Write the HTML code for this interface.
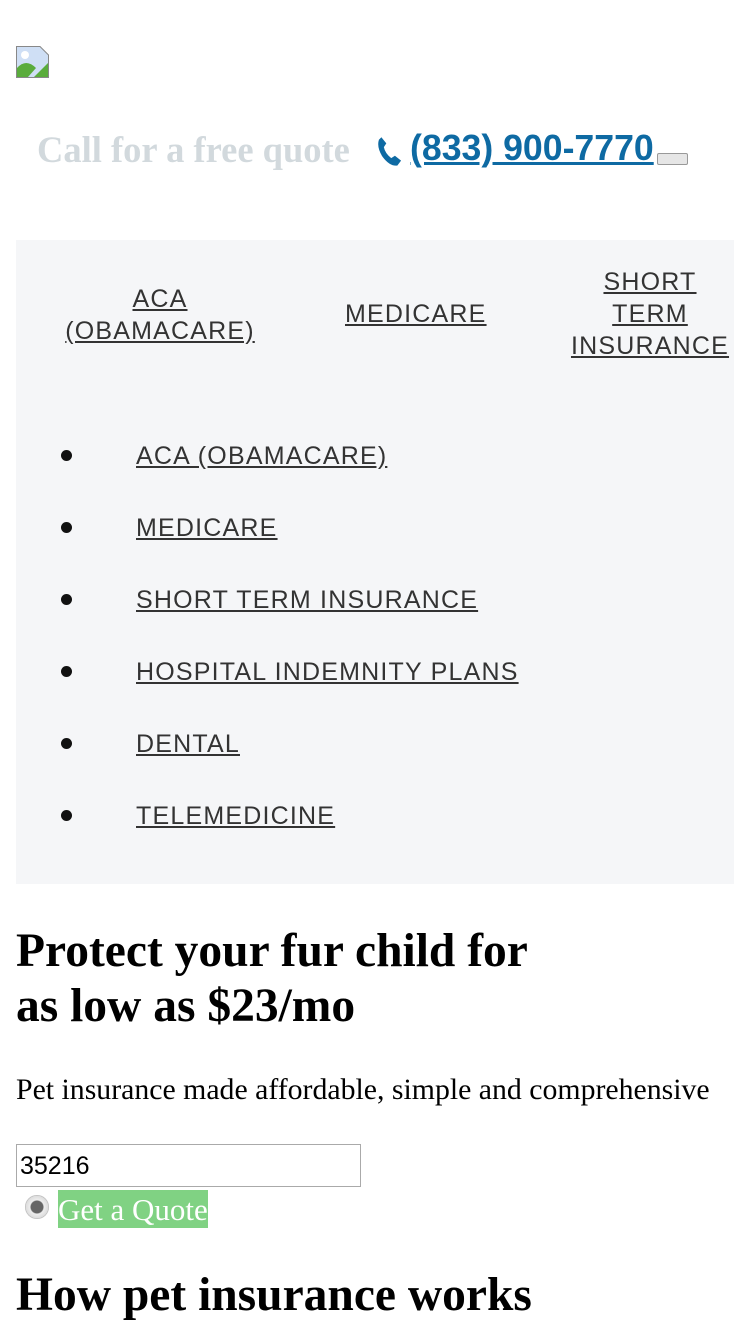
<!DOCTYPE html>
<html><head><meta charset="utf-8"><style>
body{margin:0;width:750px;height:1334px;overflow:hidden;background:#fff;position:relative;font-family:"Liberation Serif",serif}
.a{position:absolute;white-space:nowrap}
.nav{position:absolute;left:16px;top:240px;width:718px;height:644px;background:#f5f6f8}
.s{font-family:"Liberation Sans",sans-serif;color:#333;text-decoration:underline;font-size:25px;line-height:32px;letter-spacing:1.2px}
.c{text-align:center}
.dot{position:absolute;left:61px;width:11px;height:11px;border-radius:50%;background:#111}
</style></head><body>
<svg class="a" style="left:16px;top:46px" width="33" height="32" viewBox="0 0 33 32">
<path d="M0.5 0.5H24L32.5 9V31.5H0.5Z" fill="#cfdff5" stroke="#888"/>
<path d="M1 31V22Q10 12 20 22L12 31Z" fill="#5aac3c"/>
<circle cx="9" cy="9" r="4" fill="#fff"/>
<path d="M18 31L32 17V31Z" fill="#5aac3c"/>
</svg>
<div class="a" style="left:37px;top:128px;font-size:36.5px;font-weight:bold;color:#d2d9dd">Call for a free quote</div>
<svg class="a" style="left:375px;top:136px" width="30" height="32" viewBox="0 0 24 26"><path d="M5 1L9 6L7 9Q8 14 13 18L16 16L21 20L18 24Q12 25 6 17Q1 9 3 3Z" fill="#0e6aa3"/></svg>
<div class="a" style="left:410px;top:127px;font-family:'Liberation Sans',sans-serif;font-size:36px;font-weight:bold;color:#0e6aa3;text-decoration:underline;transform:scaleX(0.99);transform-origin:left">(833) 900-7770</div>
<div class="a" style="left:657px;top:153px;width:29px;height:10px;border:1px solid #999;border-radius:2px;background:#e6e6e6"></div>
<div class="nav"></div>
<div class="a s c" style="left:60px;top:283px;width:200px">ACA<br>(OBAMACARE)</div>
<div class="a s" style="left:345px;top:298px">MEDICARE</div>
<div class="a s c" style="left:570px;top:266px;width:160px">SHORT<br>TERM<br>INSURANCE</div>
<div class="dot" style="top:450px"></div><div class="a s" style="left:136px;top:440px">ACA (OBAMACARE)</div>
<div class="dot" style="top:522px"></div><div class="a s" style="left:136px;top:512px">MEDICARE</div>
<div class="dot" style="top:594px"></div><div class="a s" style="left:136px;top:584px">SHORT TERM INSURANCE</div>
<div class="dot" style="top:666px"></div><div class="a s" style="left:136px;top:656px">HOSPITAL INDEMNITY PLANS</div>
<div class="dot" style="top:738px"></div><div class="a s" style="left:136px;top:728px">DENTAL</div>
<div class="dot" style="top:810px"></div><div class="a s" style="left:136px;top:800px">TELEMEDICINE</div>
<div class="a" style="left:16px;top:924px;font-size:47.5px;font-weight:bold;line-height:55px">Protect your fur child for<br>as low as $23/mo</div>
<div class="a" style="left:16px;top:1073px;font-size:29.8px">Pet insurance made affordable, simple and comprehensive</div>
<div class="a" style="left:16px;top:1144px;width:343px;height:41px;border:1px solid #aaa;font-family:'Liberation Sans',sans-serif;font-size:25px;line-height:42px;text-indent:3px">35216</div>
<div class="a" style="left:25px;top:1195px;width:24px;height:24px;border-radius:50%;background:radial-gradient(circle,#666 0 6px,#eee 7px,#ddd 11px,#aaa 12px)"></div>
<div class="a" style="left:58px;top:1190px;width:150px;height:38px;background:#80d283;color:#fff;font-size:31px;line-height:40px">Get a Quote</div>
<div class="a" style="left:16px;top:1268px;font-size:47.5px;font-weight:bold">How pet insurance works</div>
</body></html>
